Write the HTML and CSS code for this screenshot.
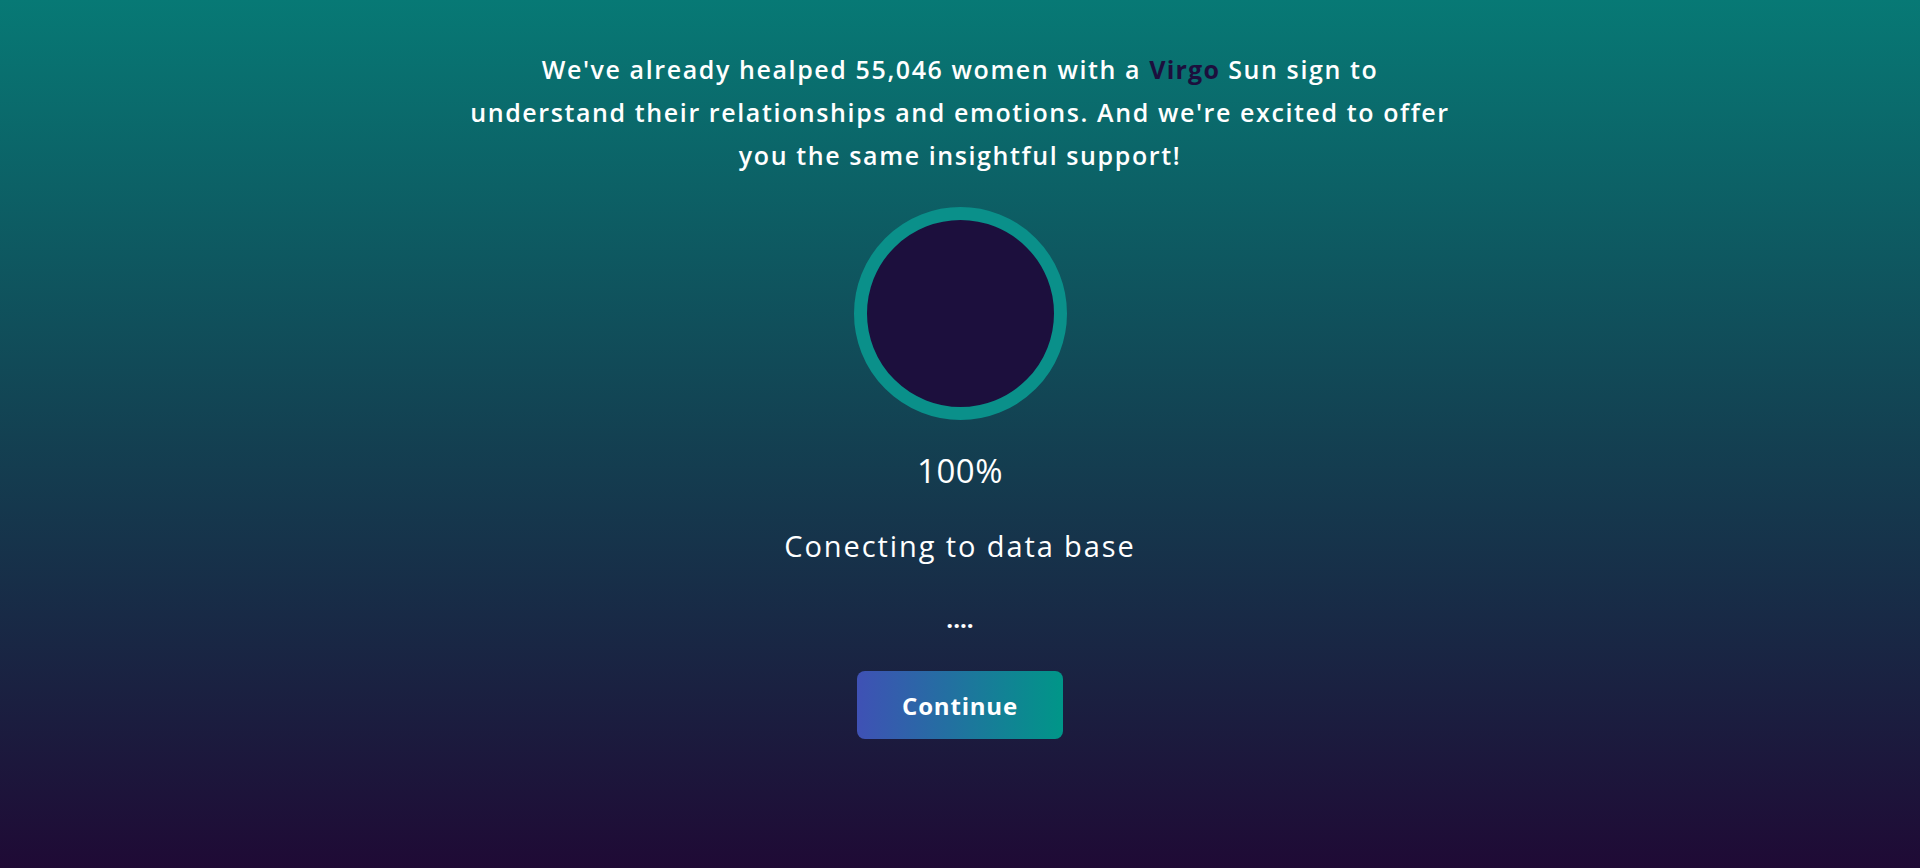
FILE: index.html
```html
<!DOCTYPE html>
<html lang="en">
<head>
<meta charset="utf-8">
<title>Loading</title>
<link rel="stylesheet" href="styles.css">
</head>
<body>
<main class="page">
  <p class="intro">We've already healped 55,046 women with a <strong class="sign">Virgo</strong> Sun sign to understand their relationships and emotions. And we're excited to offer you the same insightful support!</p>
  <div class="loader"></div>
  <div class="percent">100%</div>
  <div class="status">Conecting to data base</div>
  <div class="dots">....</div>
  <button class="continue" type="button">Continue</button>
</main>
</body>
</html>
```
FILE: styles.css
```css
html, body {
  margin: 0;
  padding: 0;
  height: 100%;
}
body {
  background: linear-gradient(to bottom, #077975 0%, #134152 50%, #1f0a35 100%);
  font-family: "Open Sans", "Noto Sans", sans-serif;
  color: #ffffff;
}
.page {
  display: flex;
  flex-direction: column;
  align-items: center;
  padding-top: 48px;
}
.intro {
  width: 1000px;
  margin: 0;
  font-size: 25px;
  line-height: 43px;
  font-weight: 600;
  letter-spacing: 1.6px;
  text-align: center;
}
.sign {
  color: #1c0f3d;
  font-weight: 700;
  letter-spacing: 1.2px;
}
.loader {
  margin-top: 30px;
  width: 213px;
  height: 213px;
  box-sizing: border-box;
  border-radius: 50%;
  border: 13px solid #0a908a;
  background: #1c0f3d;
}
.percent {
  margin-top: 27px;
  font-size: 33px;
  line-height: 48px;
  font-weight: 500;
  letter-spacing: 0.5px;
}
.status {
  margin-top: 30px;
  font-size: 29px;
  line-height: 42px;
  font-weight: 500;
  letter-spacing: 1.9px;
}
.dots {
  margin-top: 42px;
  font-size: 24px;
  line-height: 20px;
  font-weight: 700;
}
.continue {
  margin-top: 42px;
  width: 206px;
  height: 68px;
  border: none;
  border-radius: 8px;
  background: linear-gradient(90deg, #3f51b5 0%, #009688 100%);
  color: #ffffff;
  font-family: "Open Sans", "Noto Sans", sans-serif;
  font-size: 24px;
  font-weight: 700;
  letter-spacing: 0.8px;
  cursor: pointer;
}
```
